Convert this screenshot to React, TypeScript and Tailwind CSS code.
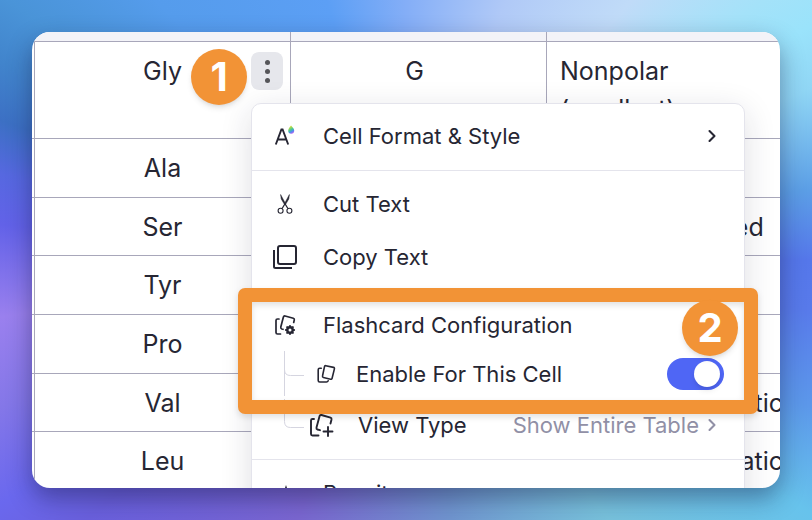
import type { ReactNode } from 'react';
import { ChevronRight } from 'lucide-react';

const rows = [
  { name: 'Gly', code: 'G', kind: 'Nonpolar (smallest)', height: 'h-[97px]' },
  { name: 'Ala', code: 'A', kind: 'Nonpolar', height: 'h-[59px]' },
  { name: 'Ser', code: 'S', kind: 'Polar, Uncharged', height: 'h-[58px]' },
  { name: 'Tyr', code: 'Y', kind: 'Aromatic', height: 'h-[59px]' },
  { name: 'Pro', code: 'P', kind: 'Nonpolar', height: 'h-[59px]' },
  { name: 'Val', code: 'V', kind: 'Nonpolar, Aliphatic', height: 'h-[58px]' },
  { name: 'Leu', code: 'L', kind: 'Nonpolar, Aliphatic', height: 'h-[59px]' },
];

const FormatIcon = () => (
  <svg width="28" height="28" viewBox="0 0 28 28" fill="none">
    <path d="M4.8 22.5 10.4 7.5h1.2L17.2 22.5M7 17.5h8" stroke="#262633" strokeWidth="1.9" />
    <path d="M20 3.500c2 2 3.200 3.700 3.200 5.300a3 3 0 0 1-6 0c0-1.600 1-3.300 2.800-5.300z" fill="url(#drop)" />
    <defs>
      <linearGradient id="drop" x1="17" y1="4" x2="22" y2="12" gradientUnits="userSpaceOnUse">
        <stop offset="0.2" stopColor="#c5dc3c" />
        <stop offset="0.5" stopColor="#45c894" />
        <stop offset="0.7" stopColor="#4b8cf0" />
        <stop offset="1" stopColor="#e454ee" />
      </linearGradient>
    </defs>
  </svg>
);

const CutIcon = () => (
  <svg width="28" height="28" viewBox="0 0 28 28" fill="none" stroke="#262633">
    <path d="M9.600 4.500 10.200 9l3.300 5.500.8-1.200zM18.400 4.500 17.800 9l-3.300 5.500-.8-1.200z" fill="#262633" strokeWidth="0.5" strokeLinejoin="round" />
    <path d="M13.500 13l3.400 5.500M14.500 13l-3.400 5.500" strokeWidth="1.300" />
    <circle cx="9.600" cy="20.700" r="2.500" strokeWidth="1.100" />
    <circle cx="18.400" cy="20.700" r="2.500" strokeWidth="1.100" />
  </svg>
);

const CopyIcon = () => (
  <svg width="28" height="28" viewBox="0 0 28 28" fill="none" stroke="#262633" strokeWidth="2">
    <rect x="7" y="3" width="18" height="18" rx="2" />
    <path d="M3 7v16.500Q3 25 4.500 25H21" />
  </svg>
);

const CardsGearIcon = () => (
  <svg width="28" height="28" viewBox="0 0 28 28" fill="none" stroke="#262633" strokeWidth="1.7" strokeLinecap="round" strokeLinejoin="round">
    <path d="M8 8H6.500Q5 8 5 9.500v12Q5 23 6.500 23H9.500" />
    <path d="M22.700 11.500l.6-2.600q.3-1.300-1-1.700l-8.200-2.200q-1.300-.3-1.700 1L9.800 16q-.3 1.500 1 2l1.200.3" />
    <circle cx="19" cy="19" r="2.700" strokeWidth="2.400" />
    <path d="M19 14.900v.5M19 22.600v.5M14.900 19h.5M22.600 19h.5M16.100 16.100l.3.3M21.600 21.600l.3.3M21.900 16.100l-.3.3M16.400 21.600l-.3.3" strokeWidth="2" />
  </svg>
);

const CardsIcon = () => (
  <svg width="22" height="22" viewBox="0 0 22 22" fill="none" stroke="#262633" strokeWidth="1.600" strokeLinecap="round" strokeLinejoin="round">
    <path d="M9.800 2.700l7.700 1.700q1.200.3.900 1.500l-2.300 9.400q-.3 1.200-1.500.9l-7.200-1.700q-1.200-.3-.9-1.500l2-9.400q.2-1.100 1.300-.9z" />
    <path d="M5.300 5.200H3.700Q2.200 5.200 2.200 6.700v10.800Q2.200 19 3.700 19h6.800q1.200 0 1.700-1.200" />
  </svg>
);

const CardsPlusIcon = () => (
  <svg width="28" height="28" viewBox="0 0 28 28" fill="none" stroke="#262633" strokeWidth="1.900" strokeLinecap="round" strokeLinejoin="round">
    <path d="M7 8H5.500Q4 8 4 9.500V23q0 1.500 1.500 1.500h6" />
    <path d="M23.500 12.500l1-4q.3-1.500-1-1.900L14.500 4q-1.500-.4-1.900 1L9.500 16.500q-.4 1.500 1 2l2.500.7" />
    <path d="M21 16v9M16.500 20.500h9" />
  </svg>
);

const SparkleIcon = () => (
  <svg width="28" height="28" viewBox="0 0 28 28" fill="#262633">
    <path d="M15 6l2 6 6 2-6 2-2 6-2-6-6-2 6-2z" />
  </svg>
);

const MenuItem = ({ icon, label, children }: { icon: ReactNode; label: string; children?: ReactNode }) => (
  <button type="button" role="menuitem" className="flex h-[53px] w-full items-center pr-[22px] pl-[19px] text-left">
    {icon}
    <span className="ml-6">{label}</span>
    {children}
  </button>
);

const Badge = ({ value }: { value: string }) => (
  <span className="flex size-14 items-center justify-center rounded-full bg-[#f29336] text-[40px] leading-none font-bold text-white shadow-md">
    {value}
  </span>
);

export default function App() {
  return (
    <main className="h-screen min-h-[300px] bg-[conic-gradient(at_50%_50%,#84aef7_0deg,#b0c9f7_21deg,#c0dbf8_41deg,#a4e2f9_54deg,#9ae3fb_60deg,#90d6f5_67deg,#5c9fe6_80deg,#5577ea_90deg,#587aea_97deg,#5c98ea_110deg,#67c3ec_122deg,#78c2dc_142deg,#7095cf_170deg,#7a66d0_203deg,#6a60dd_231deg,#6a68ee_239deg,#8477e8_250deg,#9a80ee_262deg,#6262e8_275deg,#5668e0_282deg,#3c70c4_289deg,#4184cc_296deg,#4a94d8_303deg,#559cec_316deg,#5c9ff5_343deg,#84aef7_360deg)] p-8 font-['Inter','Liberation_Sans',sans-serif] text-[#262633]">
      <div className="relative h-full overflow-hidden rounded-[18px] bg-white shadow-[0_10px_24px_rgba(20,20,60,0.42)]">
        <table className="w-full table-fixed border-separate border-spacing-0 text-[25px] leading-[38px]">
          <colgroup>
            <col className="w-[3px]" />
            <col className="w-64" />
            <col className="w-64" />
            <col />
          </colgroup>
          <thead>
            <tr className="h-[10px] bg-[#f3f3f8]">
              <td className="border-b border-[#a8a7ba] p-0" />
              <td className="border-r border-b border-[#a8a7ba] p-0" />
              <td className="border-r border-b border-[#a8a7ba] p-0" />
              <td className="border-b border-[#a8a7ba] p-0" />
            </tr>
          </thead>
          <tbody>
            {rows.map((row, i) => (
              <tr key={row.name} className={`${row.height} align-top`}>
                <td className="border-r border-b border-[#a8a7ba] p-0" />
                <td className="border-r border-b border-[#a8a7ba] px-3 pt-[10px] text-center">{row.name}</td>
                <td className="border-r border-b border-[#a8a7ba] pt-[10px] pr-5 pl-3 text-center">{row.code}</td>
                <td className="border-b border-[#a8a7ba] pt-[10px] pl-[13px]">
                  <div className={i === 0 ? 'w-40' : 'whitespace-nowrap'}>{row.kind}</div>
                </td>
              </tr>
            ))}
          </tbody>
        </table>

        {/* Cell options button */}
        <button
          type="button"
          aria-label="Cell options"
          className="absolute top-5 left-[219px] flex h-[38px] w-8 flex-col items-center justify-center gap-1 rounded-lg bg-[#e6e7ec]"
        >
          <span className="size-[5px] rounded-full bg-[#555559]" />
          <span className="size-[5px] rounded-full bg-[#555559]" />
          <span className="size-[5px] rounded-full bg-[#555559]" />
        </button>

        {/* Context menu */}
        <div
          role="menu"
          className="absolute top-[71px] right-[35px] left-[219px] rounded-[10px] border border-[#e4e4ec] bg-white text-[22px] leading-8 shadow-[0_8px_32px_rgba(30,30,60,0.14)]"
        >
          <div className="border-b border-[#e4e4ec] pt-[5px] pb-2">
            <MenuItem icon={<FormatIcon />} label="Cell Format & Style">
              <ChevronRight size={20} strokeWidth={2.5} className="ml-auto" />
            </MenuItem>
          </div>
          <div className="border-b border-[#e4e4ec] py-[6px]">
            <MenuItem icon={<CutIcon />} label="Cut Text" />
            <MenuItem icon={<CopyIcon />} label="Copy Text" />
          </div>
          <div className="border-b border-[#e4e4ec] pt-2 pb-[6px]">
            <MenuItem icon={<CardsGearIcon />} label="Flashcard Configuration" />
            <div className="flex h-[46px] items-center pr-5 pl-8">
              <svg width="20" height="46" viewBox="0 0 20 46" fill="none" stroke="#d5d5e0">
                <path d="M.5 0v45M.5 18.5q0 6 6 6H20" />
              </svg>
              <span className="ml-3">
                <CardsIcon />
              </span>
              <label htmlFor="enable-cell" className="ml-[18px]">
                Enable For This Cell
              </label>
              <input
                id="enable-cell"
                type="checkbox"
                role="switch"
                defaultChecked
                className="ml-auto flex h-8 w-[57px] appearance-none items-center rounded-full bg-gray-300 px-1 before:size-[26px] before:rounded-full before:bg-white before:shadow-md checked:justify-end checked:bg-[#4f66f5]"
              />
            </div>
            <button type="button" role="menuitem" className="flex h-14 w-full items-center pr-[22px] pl-8 text-left">
              <svg width="20" height="56" viewBox="0 0 20 56" fill="none" stroke="#d5d5e0">
                <path d="M.5 2v22.500q0 6 6 6H20" />
              </svg>
              <span className="ml-[3px]">
                <CardsPlusIcon />
              </span>
              <span className="ml-[23px]">View Type</span>
              <span className="ml-auto text-[#9190a6]">Show Entire Table</span>
              <ChevronRight size={20} strokeWidth={2.5} className="ml-[3px] text-[#9190a6]" />
            </button>
          </div>
          <div className="py-[6px]">
            <MenuItem icon={<SparkleIcon />} label="Rewrite" />
          </div>
        </div>
      </div>

      {/* Callouts drawn over the menu */}
      <div className="absolute top-[49px] left-[191px]">
        <Badge value="1" />
      </div>
      <div className="pointer-events-none absolute top-[288px] right-[54px] left-[238px] h-[126px] drop-shadow-md">
        <div className="h-full rounded-[7px] border-[14px] border-[#f29336]" />
      </div>
      <div className="pointer-events-none absolute top-[300px] right-[74px]">
        <Badge value="2" />
      </div>
    </main>
  );
}
